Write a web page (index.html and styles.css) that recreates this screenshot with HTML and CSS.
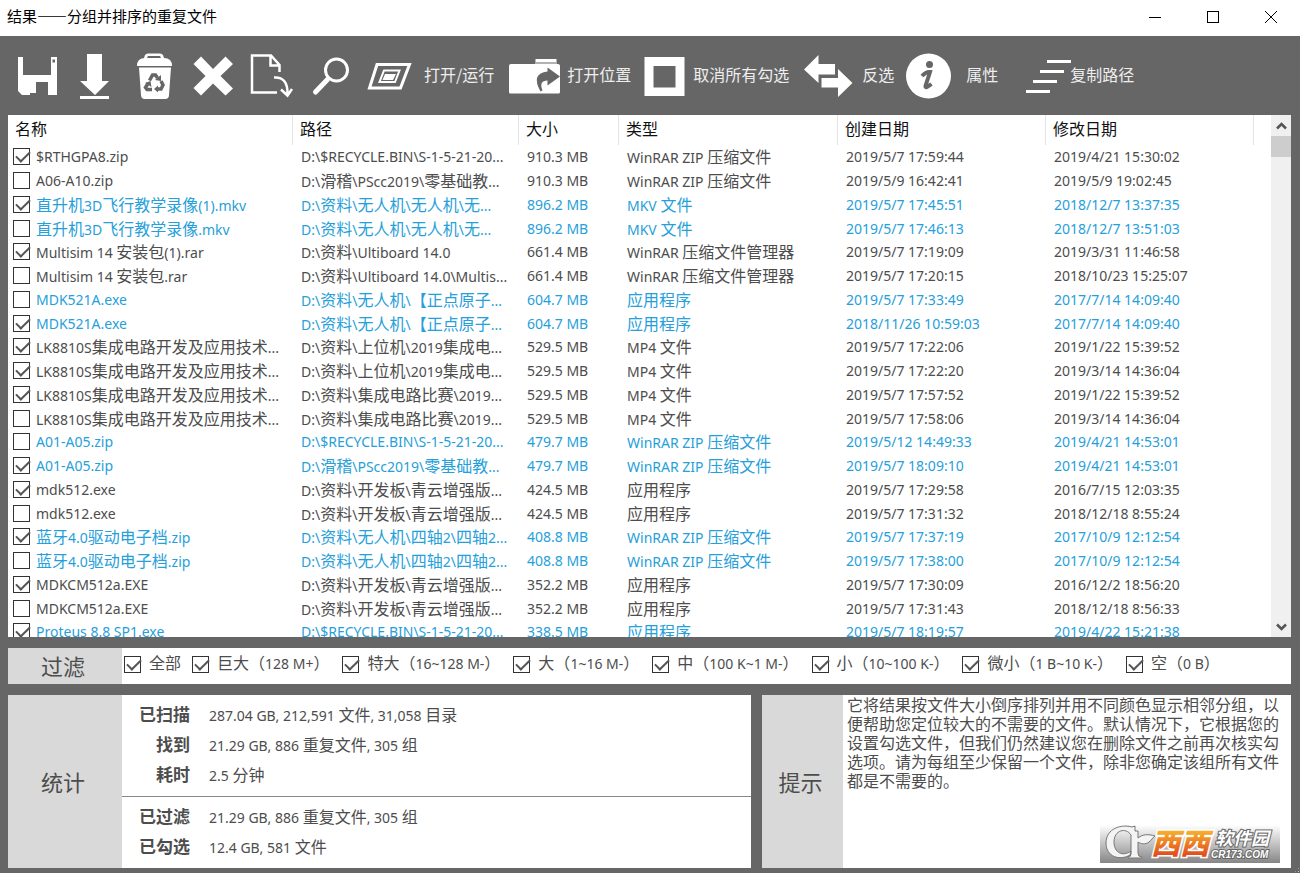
FILE: index.html
```html
<!DOCTYPE html>
<html lang="zh-CN">
<head>
<meta charset="utf-8">
<title>结果——分组并排序的重复文件</title>
<link rel="stylesheet" href="styles.css">
</head>
<body>
<header class="titlebar">
  <h1 class="title">结果——分组并排序的重复文件</h1>
  <div class="controls">
    <button class="control" aria-label="最小化"><svg width="14" height="14"><path d="M1 7.5h12"/></svg></button>
    <button class="control" aria-label="最大化"><svg width="14" height="14"><rect x="1.500" y="1.500" width="11" height="11"/></svg></button>
    <button class="control" aria-label="关闭"><svg width="14" height="14"><path d="M1 1l12 12M13 1L1 13"/></svg></button>
  </div>
</header>
<div class="frame">
  <nav class="toolbar">
    <button class="tool" aria-label="保存"><svg width="50" height="50" viewBox="16 50 50 50"><path fill-rule="evenodd" d="M18 57h5v18h28V57h6v38h-9V82H30v13h-8l-4-4zM52.500 59.500v3h2.500v-3zM30 82h6v11h-6z"/></svg></button>
    <button class="tool" aria-label="导出"><svg width="42" height="50" viewBox="74 50 42 50"><path d="M87 54h15v27h7L95 95 80 81h7zM80 96h29v3H80z"/></svg></button>
    <button class="tool" aria-label="回收站"><svg width="58" height="50" viewBox="124 50 58 50"><path d="M144 58l1-3q1-1.500 3-1.500h12q2 0 3 1.500l1 3q8 0 8 8h-35q0-8 8-8zM148 56l-1 2h14l-1-2zM139 67.500h32L169 95q0 4-4 4h-20q-4 0-4-4z" fill-rule="evenodd"/><g class="dark-line" stroke-width="3.500"><path d="M149.500 80.500l3-5.500h3l2 3M161 81l2 4-2 4h-4M152 89.500h-5l-1.500-2 2.500-4"/></g><path class="dark" d="M155 80l6 1 0-6zM158 85.500v7l-4-3.500zM145 83l5.500-2 1 6z"/></svg></button>
    <button class="tool" aria-label="删除"><svg width="48" height="50" viewBox="190 50 48 50"><path d="M201 56.500l12 12.500 12.500-12.500 7.500 7.500L220.500 76 233 88.500l-7.500 7L213 83.500 201 95.500l-7.500-7.500 12-12-12-12z"/></svg></button>
    <button class="tool" aria-label="移动"><svg width="52" height="50" viewBox="246 50 52 50"><g class="line" stroke-width="2.500"><path d="M277 92.500h-25V55.500h19l8.500 9.500v7M270.500 56v9.500h9M274 77.500q14-1 13.500 17M281 89.500l6.500 6 4.500-6.500"/></g></svg></button>
    <button class="tool" aria-label="搜索"><svg width="50" height="50" viewBox="306 50 50 50"><g class="line"><circle cx="336.500" cy="70" r="11" stroke-width="3"/><path d="M327.500 79.500L315.500 92" stroke-width="5" stroke-linecap="round"/></g></svg></button>
    <button class="tool"><svg width="52" height="50" viewBox="364 50 52 50"><g class="line"><path d="M377 64.500h32.500l-9 23.500h-31z" stroke-width="3"/><path d="M384 70.500h15.500L395 82h-15.500z" stroke-width="2"/></g><path d="M385 74h11l-3 6h-10.500z"/></svg><span>打开/运行</span></button>
    <button class="tool"><svg width="57" height="50" viewBox="502 50 57 50"><path d="M509 66q0-2 2-2h24.500v-5h21v5h1.500q2 0 2 2v26q0 1.500-1.500 1.500h-48q-1.500 0-1.500-1.500z"/><path class="dark" d="M536 62.500h20v1h-20zM547.500 67.500l12.500 9-12.500 9v-5q-9 0-5 10l-2 1q-10-18 7-20z"/></svg><span>打开位置</span></button>
    <button class="tool"><svg width="46" height="50" viewBox="639 50 46 50"><path fill-rule="evenodd" d="M644.500 57h40v39h-40zM653.500 66v21.500h22V66z"/></svg><span>取消所有勾选</span></button>
    <button class="tool"><svg width="57" height="50" viewBox="797 50 57 50"><path d="M804 69.500L818.500 55v9H835v10.500h-16.500V83zM821.500 78H838v-9l14.500 14L838 97v-9.500h-16.500z"/></svg><span>反选</span></button>
    <button class="tool"><svg width="56" height="50" viewBox="902 50 56 50"><circle cx="928.500" cy="76" r="22.500"/><circle class="dark" cx="929.500" cy="64.500" r="3.500"/><path class="dark-line" d="M922 76q4-4.500 8-4l-4.500 14q-.5 3 6-2" stroke-width="4"/></svg><span>属性</span></button>
    <button class="tool"><svg width="56" height="50" viewBox="1006 50 56 50"><path d="M1047 60h24v3h-24zM1040 70h24v3h-24zM1033 80h24v3h-24zM1026 90h24v3h-24z"/></svg><span>复制路径</span></button>
  </nav>

  <main class="results">
    <div class="list">
      <table>
        <colgroup><col class="c-name"><col class="c-path"><col class="c-size"><col class="c-type"><col class="c-date"><col class="c-date"><col></colgroup>
        <thead><tr><th>名称</th><th>路径</th><th>大小</th><th>类型</th><th>创建日期</th><th>修改日期</th><th></th></tr></thead>
        <tbody id="rows"></tbody>
      </table>
    </div>
    <div class="scrollbar">
      <button class="arrow" aria-label="向上"><svg width="11" height="8"><path d="M1 6.500l4.500-4.500L10 6.500"/></svg></button>
      <div class="track"><div class="thumb"></div></div>
      <button class="arrow" aria-label="向下"><svg width="11" height="8"><path d="M1 1.500L5.500 6 10 1.500"/></svg></button>
    </div>
  </main>

  <section class="panel filter">
    <h2 class="panel-name">过滤</h2>
    <div class="filters" data-mixed>
      <label class="all"><input type="checkbox" checked>全部</label>
      <label><input type="checkbox" checked>巨大（128 M+）</label>
      <label><input type="checkbox" checked>特大（16~128 M-）</label>
      <label><input type="checkbox" checked>大（1~16 M-）</label>
      <label><input type="checkbox" checked>中（100 K~1 M-）</label>
      <label><input type="checkbox" checked>小（10~100 K-）</label>
      <label><input type="checkbox" checked>微小（1 B~10 K-）</label>
      <label><input type="checkbox" checked>空（0 B）</label>
    </div>
  </section>

  <div class="bottom">
    <section class="panel stats">
      <h2 class="panel-name">统计</h2>
      <div class="stat-groups" data-mixed>
        <dl class="group">
          <dt>已扫描</dt><dd>287.04 GB, 212,591 文件, 31,058 目录</dd>
          <dt>找到</dt><dd>21.29 GB, 886 重复文件, 305 组</dd>
          <dt>耗时</dt><dd>2.5 分钟</dd>
        </dl>
        <dl class="group">
          <dt>已过滤</dt><dd>21.29 GB, 886 重复文件, 305 组</dd>
          <dt>已勾选</dt><dd>12.4 GB, 581 文件</dd>
        </dl>
      </div>
    </section>
    <section class="panel tips">
      <h2 class="panel-name">提示</h2>
      <p class="tip">它将结果按文件大小倒序排列并用不同颜色显示相邻分组，以便帮助您定位较大的不需要的文件。默认情况下，它根据您的设置勾选文件，但我们仍然建议您在删除文件之前再次核实勾选项。请为每组至少保留一个文件，除非您确定该组所有文件都是不需要的。</p>
      <svg class="brand" width="180" height="38" viewBox="0 0 180 38">
        <defs>
          <linearGradient id="shade" x2="0" y2="1"><stop offset="0" stop-color="#fff"/><stop offset="1" stop-color="#868686"/></linearGradient>
          <linearGradient id="orange" gradientUnits="userSpaceOnUse" x1="0" y1="6" x2="0" y2="32"><stop offset="0" stop-color="#f5b02c"/><stop offset="1" stop-color="#e2441c"/></linearGradient>
        </defs>
        <rect width="180" height="38" fill="url(#shade)"/>
        <path class="mark" d="M35 6V1l-3 1C22-1 6 3 6 18c0 14 14 18 24 12l1-4c-8 6-17 2-17-9C14 5 26 2 31 10v19q0 3-3 3v1h14v-1q-4 0-4-4V17c3 2 7 3 11 0 3-2 3-4 6-6-7-2-12-2-17 2V6z"/>
        <text class="brand-mark" x="51" y="29">西西</text>
        <text class="brand-name" x="115" y="20">软件园</text>
        <text class="brand-url" x="111" y="33">CR173.COM</text>
      </svg>
    </section>
  </div>
  <div class="grip"></div>
</div>
<script src="app.js"></script>
</body>
</html>
```

FILE: styles.css
```css
* { box-sizing: border-box; }

body {
  margin: 0;
  height: 100vh;
  display: flex;
  flex-direction: column;
  background: #666;
  color: #4d4d4d;
  font: 14px/24px "Noto Sans", "Noto Sans CJK SC", sans-serif;
  overflow: hidden;
}

h1, h2, dl, dd, p { margin: 0; font-weight: 400; }

button {
  padding: 0;
  border: 0;
  background: none;
  font: inherit;
  color: inherit;
}

.cjk { font: 16px/18px "Noto Sans CJK SC", sans-serif; }

/* Title bar */
.titlebar {
  display: flex;
  justify-content: space-between;
  height: 36px;
  background: #fff;
  color: #000;
}
.title {
  padding-left: 7px;
  font: 15px/32px "Noto Sans CJK SC", sans-serif;
}
.controls { display: flex; }
.control {
  width: 58px;
  height: 34px;
}
.control svg {
  display: block;
  margin: auto;
  fill: none;
  stroke: #000;
}

/* Window frame */
.frame {
  flex: 1;
  min-height: 0;
  display: flex;
  flex-direction: column;
  position: relative;
  padding: 0 9px 5px 8px;
}

.toolbar {
  display: flex;
  gap: 8px;
  height: 79px;
  padding: 14px 0 0 8px;
  flex: none;
}
.tool {
  display: flex;
  gap: 8px;
  align-items: center;
  height: 50px;
  color: #eee;
  font: 16px/24px "Noto Sans CJK SC", sans-serif;
  white-space: nowrap;
}
.tool svg { fill: #fff; overflow: visible; flex: none; }
.tool span { padding-bottom: 2px; }
.tool .dark { fill: #666; }
.tool .line { fill: none; stroke: #fff; }
.tool .dark-line { fill: none; stroke: #666; }

/* Result list */
.results {
  flex: 1;
  min-height: 0;
  display: flex;
  background: #fff;
}
.list { flex: 1; overflow: hidden; }
table {
  width: 100%;
  table-layout: fixed;
  border-collapse: separate;
  border-spacing: 0;
}
.c-name { width: 285px; }
.c-path { width: 226px; }
.c-size { width: 100px; }
.c-type { width: 219px; }
.c-date { width: 208px; }
th {
  height: 30px;
  padding: 0 0 4px 7px;
  border-right: 1px solid #e5e5e5;
  color: #111;
  font: 16px/24px "Noto Sans CJK SC", sans-serif;
  text-align: left;
}
th:last-child { border: 0; }
tr { height: 24px; }
tbody tr:nth-child(4n) { height: 23px; }
td {
  padding: 0 0 0 8px;
  line-height: 18px;
  white-space: nowrap;
}
td:first-child { padding-left: 5px; }
td label { display: flex; align-items: center; gap: 6px; }
.blue { color: #26a0da; }

input[type="checkbox"] {
  appearance: none;
  flex: none;
  width: 17px;
  height: 17px;
  margin: 0;
  border: 1px solid #333;
  background: #fff;
}
input[type="checkbox"]:checked::before {
  content: "";
  display: block;
  width: 12px;
  height: 6px;
  margin: 3px 0 0 2px;
  border: solid #555;
  border-width: 0 0 2px 2px;
  transform: translateY(-1px) rotate(-45deg);
}
td input[type="checkbox"] { margin-bottom: 1px; }

.scrollbar {
  display: flex;
  flex-direction: column;
  width: 20px;
  background: #f0f0f0;
}
.arrow { height: 21px; }
.arrow svg {
  display: block;
  margin: auto;
  fill: none;
  stroke: #555;
  stroke-width: 2.500;
}
.track { flex: 1; }
.thumb { height: 21px; background: #cdcdcd; }

/* Panels */
.panel { display: flex; background: #fff; }
.panel-name {
  display: flex;
  align-items: center;
  justify-content: center;
  flex: none;
  width: 114px;
  padding: 0 4px 2px 0;
  background: #d9d9d9;
  font: 22px/30px "Noto Sans CJK SC", sans-serif;
}

.filter {
  flex: none;
  height: 36px;
  margin-top: 11px;
}
.filters {
  display: flex;
  gap: 13px;
  padding: 0 0 4px 2px;
  white-space: nowrap;
}
.filters label { display: flex; align-items: center; gap: 8px; }
.filters .all { margin-right: -2px; }

.bottom {
  flex: none;
  display: flex;
  gap: 11px;
  height: 173px;
  margin-top: 11px;
}
.stats { flex: 743; }
.tips { flex: 529; position: relative; }
.tips .panel-name { width: 81px; }
.stat-groups { flex: 1; }
.group {
  display: grid;
  grid-template-columns: 68px 1fr;
  column-gap: 19px;
  padding: 6px 0 5px;
  line-height: 30px;
}
.group + .group { border-top: 1px solid #888; }
dt { text-align: right; }
dt .cjk { font-size: 17px; font-weight: 700; }
.tip {
  padding-left: 4px;
  font: 16px/19px "Noto Sans CJK SC", sans-serif;
}

/* Site badge over the tips panel */
.brand { position: absolute; right: 11px; bottom: 5px; }
.mark { fill: #f4f4f4; stroke: #777; }
.brand-mark, .brand-name, .brand-url {
  fill: #fff;
  stroke: #666;
  stroke-width: 2;
  paint-order: stroke;
  font: italic 700 18px "Noto Sans CJK SC", sans-serif;
}
.brand-mark {
  fill: url(#orange);
  stroke: #fff;
  stroke-width: 3;
  font-size: 29px;
  font-weight: 900;
}
.brand-url { font: italic 700 10px "Liberation Sans", sans-serif; }

.grip {
  position: absolute;
  right: 0;
  bottom: 0;
  width: 6px;
  height: 6px;
  background: radial-gradient(circle, #ccc 1px, transparent 1px) 0 0 / 3px 3px;
  clip-path: polygon(100% 0, 100% 100%, 0 100%);
}
```

FILE: app.js
```js
const files = [
  [1, "$RTHGPA8.zip", "D:\\$RECYCLE.BIN\\S-1-5-21-20...", "910.3 MB", "WinRAR ZIP 压缩文件", "2019/5/7 17:59:44", "2019/4/21 15:30:02"],
  [0, "A06-A10.zip", "D:\\滑稽\\PScc2019\\零基础教...", "910.3 MB", "WinRAR ZIP 压缩文件", "2019/5/9 16:42:41", "2019/5/9 19:02:45"],
  [1, "直升机3D飞行教学录像(1).mkv", "D:\\资料\\无人机\\无人机\\无...", "896.2 MB", "MKV 文件", "2019/5/7 17:45:51", "2018/12/7 13:37:35"],
  [0, "直升机3D飞行教学录像.mkv", "D:\\资料\\无人机\\无人机\\无...", "896.2 MB", "MKV 文件", "2019/5/7 17:46:13", "2018/12/7 13:51:03"],
  [1, "Multisim 14 安装包(1).rar", "D:\\资料\\Ultiboard 14.0", "661.4 MB", "WinRAR 压缩文件管理器", "2019/5/7 17:19:09", "2019/3/31 11:46:58"],
  [0, "Multisim 14 安装包.rar", "D:\\资料\\Ultiboard 14.0\\Multis...", "661.4 MB", "WinRAR 压缩文件管理器", "2019/5/7 17:20:15", "2018/10/23 15:25:07"],
  [0, "MDK521A.exe", "D:\\资料\\无人机\\【正点原子...", "604.7 MB", "应用程序", "2019/5/7 17:33:49", "2017/7/14 14:09:40"],
  [1, "MDK521A.exe", "D:\\资料\\无人机\\【正点原子...", "604.7 MB", "应用程序", "2018/11/26 10:59:03", "2017/7/14 14:09:40"],
  [1, "LK8810S集成电路开发及应用技术...", "D:\\资料\\上位机\\2019集成电...", "529.5 MB", "MP4 文件", "2019/5/7 17:22:06", "2019/1/22 15:39:52"],
  [1, "LK8810S集成电路开发及应用技术...", "D:\\资料\\上位机\\2019集成电...", "529.5 MB", "MP4 文件", "2019/5/7 17:22:20", "2019/3/14 14:36:04"],
  [1, "LK8810S集成电路开发及应用技术...", "D:\\资料\\集成电路比赛\\2019...", "529.5 MB", "MP4 文件", "2019/5/7 17:57:52", "2019/1/22 15:39:52"],
  [0, "LK8810S集成电路开发及应用技术...", "D:\\资料\\集成电路比赛\\2019...", "529.5 MB", "MP4 文件", "2019/5/7 17:58:06", "2019/3/14 14:36:04"],
  [0, "A01-A05.zip", "D:\\$RECYCLE.BIN\\S-1-5-21-20...", "479.7 MB", "WinRAR ZIP 压缩文件", "2019/5/12 14:49:33", "2019/4/21 14:53:01"],
  [1, "A01-A05.zip", "D:\\滑稽\\PScc2019\\零基础教...", "479.7 MB", "WinRAR ZIP 压缩文件", "2019/5/7 18:09:10", "2019/4/21 14:53:01"],
  [1, "mdk512.exe", "D:\\资料\\开发板\\青云增强版...", "424.5 MB", "应用程序", "2019/5/7 17:29:58", "2016/7/15 12:03:35"],
  [0, "mdk512.exe", "D:\\资料\\开发板\\青云增强版...", "424.5 MB", "应用程序", "2019/5/7 17:31:32", "2018/12/18 8:55:24"],
  [1, "蓝牙4.0驱动电子档.zip", "D:\\资料\\无人机\\四轴2\\四轴2...", "408.8 MB", "WinRAR ZIP 压缩文件", "2019/5/7 17:37:19", "2017/10/9 12:12:54"],
  [0, "蓝牙4.0驱动电子档.zip", "D:\\资料\\无人机\\四轴2\\四轴2...", "408.8 MB", "WinRAR ZIP 压缩文件", "2019/5/7 17:38:00", "2017/10/9 12:12:54"],
  [1, "MDKCM512a.EXE", "D:\\资料\\开发板\\青云增强版...", "352.2 MB", "应用程序", "2019/5/7 17:30:09", "2016/12/2 18:56:20"],
  [0, "MDKCM512a.EXE", "D:\\资料\\开发板\\青云增强版...", "352.2 MB", "应用程序", "2019/5/7 17:31:43", "2018/12/18 8:56:33"],
  [1, "Proteus 8.8 SP1.exe", "D:\\$RECYCLE.BIN\\S-1-5-21-20...", "338.5 MB", "应用程序", "2019/5/7 18:19:57", "2019/4/22 15:21:38"]
];

// Chinese runs are set larger than the Latin text around them.
const mixed = text =>
  text.replace(/[\u3000-\u9fff\uff00-\uffef]+/g, run => `<span class="cjk">${run}</span>`);

// Neighbouring groups of equal size alternate in colour.
let blue = false;
let lastSize = files[0][3];
document.getElementById("rows").innerHTML = files.map(([checked, name, ...cells]) => {
  if (cells[1] !== lastSize) blue = !blue;
  lastSize = cells[1];
  const box = `<input type="checkbox"${checked ? " checked" : ""}>`;
  return `<tr${blue ? ' class="blue"' : ""}><td><label>${box}<span>${mixed(name)}</span></label></td>` +
    cells.map(cell => `<td>${mixed(cell)}</td>`).join("") + "<td></td></tr>";
}).join("");

document.querySelectorAll("[data-mixed] dt, [data-mixed] dd").forEach(el => {
  el.innerHTML = mixed(el.textContent);
});
document.querySelectorAll(".filters label").forEach(label => {
  const caption = document.createElement("span");
  caption.innerHTML = mixed(label.lastChild.textContent);
  label.lastChild.replaceWith(caption);
});
```
